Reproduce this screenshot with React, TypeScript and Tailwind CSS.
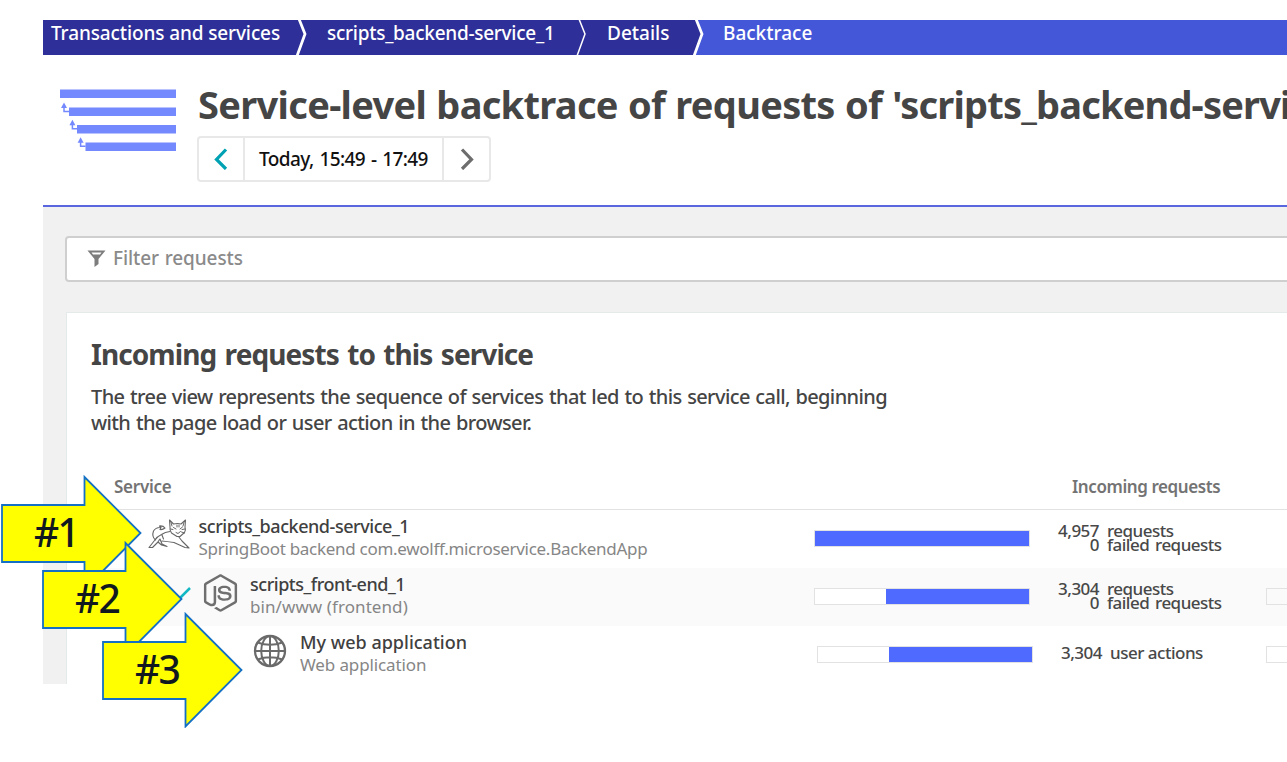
import { FaNodeJs } from "react-icons/fa";
import type { ReactNode } from "react";

function Separator({ thin = false, last = false }: { thin?: boolean; last?: boolean }) {
  return (
    <svg width="12" height="35" viewBox="0 0 12 35" className="shrink-0">
      {last && <path d="M4 0 L9.5 14 L1 35 L12 35 L12 0 Z" fill="#4457d8" />}
      <path d="M3 -1 L9 14 L1 36" fill="none" stroke="#fff" strokeWidth={thin ? 1.5 : 2.8} />
    </svg>
  );
}

function BacktraceIcon() {
  return (
    <svg width="116" height="62" viewBox="0 0 116 62" className="shrink-0" fill="#7589ff">
      <rect x="0" y="0.5" width="116" height="8.5" />
      <rect x="9" y="18.5" width="107" height="8.5" />
      <rect x="17" y="36" width="99" height="8.5" />
      <rect x="25.5" y="53.500" width="90.5" height="8.5" />
      {[[0, 0], [8.4, 17.3], [16.6, 34.8]].map(([x, y]) => (
        <g key={x} transform={`translate(${x} ${y})`}>
          <path d="M4 13.500 L1 19 L7 19 Z" />
          <path d="M4 18 V22.500 H9" fill="none" stroke="#7589ff" strokeWidth="1.5" />
        </g>
      ))}
    </svg>
  );
}

function Tomcat() {
  return (
    <svg width="42" height="34" viewBox="0 0 42 34" fill="none" stroke="#666" strokeWidth="1.1" strokeLinejoin="round" strokeLinecap="round" className="shrink-0">
      <path d="M21.500 2 L25.500 6 Q29.500 5 33 6 L37.500 2 L37 9 Q38 12 36.500 14.500 L32 18.500 L29 18.500 L23.500 15 Q21.500 12 22 9 Z" />
      <path d="M23 4.500 L24 8 M36 4.500 L35 8 M22.500 11 L25 11.500 M34 11.500 L37 11 M25.500 9.500 L28 11 M34.500 9 L32 11 M28 14.500 L30 15.500 L32.500 13.500 M29 7 V9 M31 7 V9 M33.500 14 L36.500 15" strokeWidth="1" />
      <path d="M22 13.500 Q17 14 13.500 16.500 Q9 18.500 6.500 22.500 L1 29.500 L4.500 29.500 L10 24 L11.500 21.500 M30.500 18.500 L34 23 L41 30 L37 29.500 L26 24.500 Q19 23.500 14 23 M12 21 L14 26 L19 28.500 L13.500 27 L10 24 M14 17 L15.500 21" />
      <path d="M7.500 22 Q3.500 18.500 5.500 13 Q8 9 13 9.500 L11.500 8 Q15 7.500 17 10 Q14.500 12 12 11.500 L13 9.500" />
    </svg>
  );
}

function Globe() {
  return (
    <svg width="34" height="34" viewBox="0 0 34 34" fill="none" stroke="#6a6a6a" strokeWidth="2" className="shrink-0">
      <circle cx="17" cy="17" r="15" strokeWidth="2.300" />
      <ellipse cx="17" cy="17" rx="8.800" ry="15" />
      <path d="M17 2 V32 M1.800 17 H32.200 M4.500 8.500 Q17 13 29.500 8.500 M4.500 25.500 Q17 21 29.500 25.500" />
    </svg>
  );
}

function Bar({ empty }: { empty: string }) {
  return (
    <div className="flex h-[17px] w-[216px] border border-[#e2e2e2] bg-white">
      <div className={empty} />
      <div className="flex-1 bg-[#4f6aff]" />
    </div>
  );
}

function Arrow({ label, place }: { label: string; place: string }) {
  return (
    <div className={`absolute h-[117px] w-[142px] ${place}`}>
      <svg width="142" height="117" viewBox="0 0 142 117" className="absolute inset-0">
        <path d="M2 31 H84.500 V3 L140.500 59 L84.500 115.500 V88 H2 Z" fill="#ffff00" stroke="#1470c4" strokeWidth="1.800" />
      </svg>
      <span className="absolute top-[38px] left-[34px] text-[39px] leading-[40px] font-medium tracking-[-1.800px] text-[#111820]">{label}</span>
    </div>
  );
}

function Name({ title, sub, t, s }: { title: string; sub: string; t: string; s: string }) {
  return (
    <div className="pt-[5px] whitespace-nowrap">
      <div className={`text-[18px] leading-[23px] font-medium text-[#404040] ${t}`}>{title}</div>
      <div className={`text-[17px] leading-[22px] text-[#868686] ${s}`}>{sub}</div>
    </div>
  );
}

function Row({ indent, children, bar, barCell, counts, next, shade = "" }: { indent: string; children: ReactNode; bar: string; barCell: string; counts: ReactNode; next: boolean; shade?: string }) {
  return (
    <div className={`flex h-[58px] ${shade}`}>
      <div className={`flex w-[723px] shrink-0 ${indent}`}>{children}</div>
      <div className={`w-[236px] shrink-0 pt-[20px] ${barCell}`}><Bar empty={bar} /></div>
      <div className="w-[216px] shrink-0 text-[17px] leading-[14px] font-medium text-[#484848]">{counts}</div>
      {next && <div className="mt-[20px] h-[17px] w-[40px] shrink-0 border border-[#e2e2e2]" />}
    </div>
  );
}

function Counts({ total }: { total: string }) {
  return (
    <div className="grid grid-cols-[49px_auto] gap-x-[8px] pt-[14px] tracking-[-0.520px] whitespace-nowrap [word-spacing:2px]">
      <span className="text-right">{total}</span><span>requests</span>
      <span className="text-right">0</span><span>failed requests</span>
    </div>
  );
}

export default function App() {
  return (
    <div className="relative h-[762px] w-[1287px] overflow-hidden bg-white pt-[20px] pl-[43px] font-['Noto_Sans',sans-serif]">
      <nav className="flex h-[35px] items-start bg-[#4457d8] text-[19px] leading-[26px] font-medium whitespace-nowrap text-white">
        <div className="flex bg-[#2e2f98]">
          <div className="h-[35px] w-[253px] pl-[8px] tracking-[-0.120px]">Transactions and services</div>
          <Separator />
          <div className="w-[268px] pl-[19px] tracking-[-0.270px]">scripts_backend-service_1</div>
          <Separator thin />
          <div className="w-[105px] pl-[19px]">Details</div>
          <Separator last />
        </div>
        <div className="pl-[18px]">Backtrace</div>
      </nav>

      <header className="flex h-[150px] gap-[22px] pt-[34px] pl-[17px]">
        <BacktraceIcon />
        <div>
          <h1 className="-mt-[11px] h-[58px] text-[38px] leading-[52px] font-bold tracking-[-0.690px] whitespace-nowrap text-[#454545] [word-spacing:1px]">Service-level backtrace of requests of <span className="tracking-[-0.820px]">'scripts_backend-service_1'</span></h1>
          <div className="-ml-[1px] flex h-[46px] w-[294px] rounded-[4px] border-2 border-[#e8e8e8]">
            <div className="flex w-[46px] items-center justify-center border-r-2 border-[#e8e8e8]">
              <svg width="14" height="22" viewBox="0 0 14 22" fill="none" stroke="#00a1b2" strokeWidth="3.200"><path d="M12 1.500 L2.500 11.500 L12 21" /></svg>
            </div>
            <div className="flex-1 text-center text-[19px] leading-[43px] font-medium tracking-[-0.600px] whitespace-nowrap text-[#111] [word-spacing:1.500px]">Today, 15:49 - 17:49</div>
            <div className="flex w-[47px] items-center justify-center border-l-2 border-[#e8e8e8]">
              <svg width="14" height="22" viewBox="0 0 14 22" fill="none" stroke="#6d6d6d" strokeWidth="3.200"><path d="M2 1.500 L11.500 11.500 L2 21" /></svg>
            </div>
          </div>
        </div>
      </header>

      <main className="h-[479px] border-t-2 border-[#5a66de] bg-[#f1f1f1] pt-[29px] pl-[22px]">
        <div className="flex h-[46px] w-[1240px] items-center rounded-[4px] border-2 border-[#cfcfcf] bg-white pb-[2px] pl-[20px] text-[19px] font-medium tracking-[-0.100px] text-[#8a8a8a] [word-spacing:1px]">
          <svg width="20" height="17" viewBox="0 0 20 17" className="mr-[6px]" fill="#7d7d7d"><path fillRule="evenodd" d="M0.500 0.500 H18.500 L11.500 9 V14 L7.500 17 V9 Z M4.500 2.500 L6 4.500 H13 L14.500 2.500 Z" /></svg>
          <span>Filter requests</span>
        </div>

        <section className="ml-px mt-[30px] h-[372px] w-[1300px] border-t border-l border-[#e4eaea] bg-white pl-[24px] text-[#454545]">
          <h2 className="pt-[23px] text-[28px] leading-[36px] font-bold tracking-[-0.920px] whitespace-nowrap [word-spacing:2px]">Incoming requests to this service</h2>
          <p className="mt-[12px] text-[20px] leading-[26px] font-medium tracking-[-0.610px] whitespace-nowrap [word-spacing:1px]">
            The tree view represents the sequence of services that led to this service call, beginning<br />with the page load or user action in the browser.
          </p>
          <div className="mt-[28px] flex h-[46px] border-b border-[#e2e2e2] pl-[23px] text-[17px] leading-[46px] font-semibold tracking-[-0.420px] text-[#737373]">
            <div className="w-[958px] tracking-[-0.250px]">Service</div>
            <div className="whitespace-nowrap">Incoming requests</div>
          </div>
          <Row indent="pl-[57px]" bar="w-0" barCell="" next={false} counts={<Counts total="4,957" />}>
            <div className="w-[50.500px] shrink-0 pt-[8px]"><Tomcat /></div>
            <Name title="scripts_backend-service_1" sub="SpringBoot backend com.ewolff.microservice.BackendApp" t="tracking-[-0.450px]" s="tracking-[-0.290px]" />
          </Row>
          <Row indent="pl-[112px]" shade="bg-[#fafafa]" bar="w-[71px]" barCell="" next counts={<Counts total="3,304" />}>
            <div className="w-[47px] shrink-0 pt-[6px]"><FaNodeJs className="h-[38px] w-[35px] text-[#6f6f6f]" /></div>
            <Name title="scripts_front-end_1" sub="bin/www (frontend)" t="tracking-[-0.480px]" s="tracking-[0.080px]" />
          </Row>
          <Row indent="pl-[162px]" bar="w-[71px]" barCell="pl-[3px]" next counts={<div className="flex gap-[8px] pt-[20px] pl-[11px] tracking-[-0.500px]"><span>3,304</span><span>user actions</span></div>}>
            <div className="w-[47px] shrink-0 pt-[8px]"><Globe /></div>
            <Name title="My web application" sub="Web application" t="" s="tracking-[-0.120px]" />
          </Row>
        </section>
      </main>

      <svg width="14" height="14" viewBox="0 0 14 14" className="absolute top-[586px] left-[178px]"><path d="M2 12 L12 2" stroke="#14b8c4" strokeWidth="2.500" /></svg>
      <Arrow label="#1" place="top-[474px] left-[0px]" />
      <Arrow label="#2" place="top-[540px] left-[41px]" />
      <Arrow label="#3" place="top-[611px] left-[101px]" />
    </div>
  );
}
